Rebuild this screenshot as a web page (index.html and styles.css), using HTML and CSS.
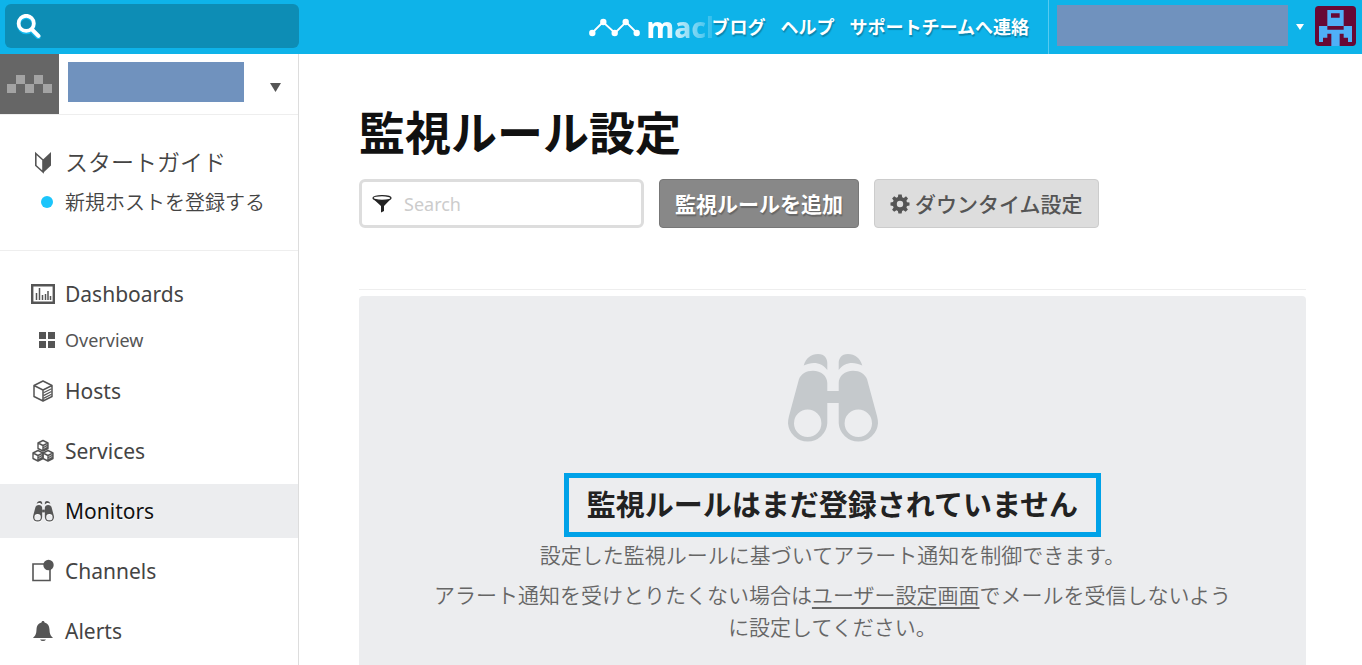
FILE: index.html
```html
<!DOCTYPE html>
<html lang="ja">
<head>
<meta charset="utf-8">
<meta name="viewport" content="width=device-width, initial-scale=1">
<title>監視ルール設定</title>
<link rel="stylesheet" href="styles.css">
</head>
<body>
<svg class="defs" aria-hidden="true">
  <defs>
    <path id="binocular-half" fill-rule="evenodd" d="M15.7 11.5C18 4 23 0 30 0C37 0 39.3 5 39.3 9V16C34 8.500 25 7 15.700 11.500ZM11 25C13 20 18 16.700 25 16.700C33 16.700 39.300 22 39.300 29V69.300A19.700 19.700 0 0 1 0 69.300Q0 66 1 62ZM6 69.300A13.700 13.700 0 0 0 33.400 69.300A13.700 13.700 0 0 0 6 69.300Z"/>
    <symbol id="binoculars" viewBox="0 0 90 90">
      <use href="#binocular-half"/>
      <use href="#binocular-half" transform="translate(90 0) scale(-1 1)"/>
      <path d="M39 37h12v12H39z"/>
    </symbol>
    <symbol id="cube" viewBox="0 0 24 24">
      <path d="M12 2L21 6.500V17.500L12 22L3 17.500V6.500ZM3 6.500L12 11L21 6.500M12 11V22" fill="none" stroke="currentColor" stroke-width="1.500" stroke-linejoin="round"/>
      <path d="M12.500 13.800L20.500 9.700M12.500 16.600L20.500 12.500M12.500 19.400L20.500 15.300" stroke="currentColor" stroke-width="1.200"/>
    </symbol>
  </defs>
</svg>

<header class="topbar">
  <label class="topsearch">
    <svg class="topsearch-icon" viewBox="0 0 24 24" aria-hidden="true">
      <g fill="none" stroke-linecap="round"><g stroke="#12b9f0"><circle cx="9.800" cy="10.300" r="7.300" stroke-width="3.600"/><path d="M15.500 16.500L21.500 22.500" stroke-width="4"/></g><g stroke="#fff"><circle cx="9.800" cy="9" r="7.300" stroke-width="3.600"/><path d="M15.500 15L21.500 21" stroke-width="4"/></g></g>
    </svg>
    <input class="topsearch-input" type="text" aria-label="検索">
  </label>
  <a class="brand" href="#">
    <svg class="brand-mark" viewBox="0 0 51 20" aria-hidden="true">
      <path d="M3 15L14 4L26 15L37 4L48 15" fill="none" stroke="#fff" stroke-width="1.800"/>
      <g fill="#fff"><circle cx="3.300" cy="15" r="3.200"/><circle cx="14.300" cy="4" r="3.200"/><circle cx="25.700" cy="15" r="3.200"/><circle cx="36.700" cy="4" r="3.200"/><circle cx="47.700" cy="15" r="3.200"/></g>
    </svg>
    <span class="brand-name">mach</span>
  </a>
  <nav class="toplinks">
    <a href="#">ブログ</a>
    <a href="#">ヘルプ</a>
    <a href="#">サポートチームへ連絡</a>
  </nav>
  <button class="account" type="button" aria-label="アカウント">
    <span class="account-name"></span>
    <svg class="account-caret" viewBox="0 0 8 6" aria-hidden="true"><path d="M0 0h8L4 6z" fill="#fff"/></svg>
    <svg class="avatar" viewBox="0 0 123 120" aria-hidden="true">
      <rect width="123" height="120" rx="11" fill="#670834"/>
      <path fill="#4fb0f7" fill-rule="evenodd" d="M37 12H86V60H111V108H99V95H86V83H74V120H49V83H37V95H24V108H12V60H37ZM48 22V35H74V22ZM37 60V71H86V60Z"/>
    </svg>
  </button>
</header>

<div class="layout">
  <aside class="sidebar">
    <button class="org" type="button" aria-label="オーガニゼーション">
      <span class="org-logo">
        <svg viewBox="0 0 45 18" aria-hidden="true"><path fill="#a3a3a3" d="M0 9h9v9H0zM9 0h9v9H9zM18 9h9v9h-9zM27 0h9v9h-9zM36 9h9v9h-9z"/></svg>
      </span>
      <span class="org-name"></span>
      <svg class="org-caret" viewBox="0 0 11 9" aria-hidden="true"><path d="M0 0h11L5.500 9z" fill="#555"/></svg>
    </button>

    <div class="guide">
      <a class="item guide-title" href="#">
        <svg class="icon" viewBox="0 0 24 24" aria-hidden="true"><path fill="none" stroke="currentColor" stroke-width="1.600" d="M4.800 3.500L12 10V22L4.800 15.500Z"/><path fill="currentColor" d="M12 9.500L20 2V15.500L12 23Z"/></svg>
        <span>スタートガイド</span>
      </a>
      <a class="item guide-step" href="#">
        <svg class="icon dot" viewBox="0 0 24 24" aria-hidden="true"><circle cx="16" cy="12" r="6" fill="#1cc5fb"/></svg>
        <span>新規ホストを登録する</span>
      </a>
    </div>

    <nav class="menu">
      <a class="item" href="#">
        <svg class="icon" viewBox="0 0 24 24" aria-hidden="true"><path fill="none" stroke="currentColor" stroke-width="2.400" d="M1.200 3.200H22.800V20.800H1.200Z"/><path stroke="currentColor" stroke-width="1.500" d="M5.500 18V11M8.500 18V6M11.500 18V13M14.500 18V12M17 18V9M19.500 18V14"/></svg>
        <span>Dashboards</span>
      </a>
      <a class="item item-sub" href="#">
        <svg class="icon" viewBox="0 0 24 24" aria-hidden="true"><path fill="currentColor" d="M8 4h7v7H8zM17 4h7v7h-7zM8 13h7v7H8zM17 13h7v7h-7z"/></svg>
        <span>Overview</span>
      </a>
      <a class="item" href="#">
        <svg class="icon" aria-hidden="true"><use href="#cube"/></svg>
        <span>Hosts</span>
      </a>
      <a class="item" href="#">
        <svg class="icon" viewBox="0 0 24 24" aria-hidden="true"><g fill="none" stroke="currentColor" stroke-width="1.400" stroke-linejoin="round"><path id="small-cube" d="M12 1.500L17 4V9.500L12 12L7 9.500V4ZM7 4L12 6.500L17 4M12 6.500V12M12.500 8.500L17 6.200M12.500 10.500L17 8.200"/><use href="#small-cube" x="-5" y="10"/><use href="#small-cube" x="5" y="10"/></g></svg>
        <span>Services</span>
      </a>
      <a class="item item-active" href="#" aria-current="page">
        <svg class="icon icon-monitors" viewBox="0 0 24 24" aria-hidden="true"><use href="#binoculars" x="2" y="2" width="21" height="21"/></svg>
        <span>Monitors</span>
      </a>
      <a class="item" href="#">
        <svg class="icon" viewBox="0 0 24 24" aria-hidden="true"><path fill="none" stroke="currentColor" stroke-width="1.600" d="M2 5H19V21.500H2Z"/><circle cx="17.500" cy="6" r="5.200" fill="currentColor"/></svg>
        <span>Channels</span>
      </a>
      <a class="item" href="#">
        <svg class="icon" viewBox="0 0 24 24" aria-hidden="true"><path fill="currentColor" d="M12 2C13 2 13.500 2.600 13.500 3.600C17 4.500 18.300 7 18.500 10.500C18.700 15 19.500 16.500 22 19H2C4.500 16.500 5.300 15 5.500 10.500C5.700 7 7 4.500 10.500 3.600C10.500 2.600 11 2 12 2ZM9 20.500H15Q14 22 12 22T9 20.500Z"/></svg>
        <span>Alerts</span>
      </a>
    </nav>
  </aside>

  <main class="content">
    <h1 class="title">監視ルール設定</h1>
    <div class="toolbar">
      <label class="filter">
        <svg class="filter-icon" viewBox="0 0 20 18" aria-hidden="true"><ellipse cx="10" cy="3" rx="9" ry="2.300" fill="none" stroke="currentColor" stroke-width="1.300"/><path fill="currentColor" d="M.500 3.200C3 6 17 6 19.500 3.200L12 11V16L9 17.500V11Z"/></svg>
        <input class="filter-input" type="text" placeholder="Search" aria-label="Search">
      </label>
      <button class="button button-primary" type="button">監視ルールを追加</button>
      <button class="button button-plain" type="button">
        <svg class="gear" viewBox="0 0 20 20" aria-hidden="true"><path fill="currentColor" fill-rule="evenodd" d="M8.300.500H11.700L12.200 3.200L13.800 3.900L16 2.300L18 4.500L16.400 6.700L17 8.200L19.500 8.600V11.500L17 12L16.400 13.400L17.900 15.600L15.700 17.800L13.500 16.300L12.100 16.900L11.600 19.500H8.400L7.900 16.900L6.400 16.300L4.200 17.800L2.100 15.700L3.600 13.400L3 12L.500 11.500V8.500L3 8L3.600 6.600L2.100 4.400L4.200 2.200L6.400 3.800L7.900 3.100ZM10 6.800A3.200 3.200 0 0 0 10 13.200A3.200 3.200 0 0 0 10 6.800Z"/></svg>
        <span>ダウンタイム設定</span>
      </button>
    </div>
    <section class="empty">
      <svg class="empty-icon" aria-hidden="true"><use href="#binoculars"/></svg>
      <h2 class="empty-title">監視ルールはまだ登録されていません</h2>
      <p class="empty-text">設定した監視ルールに基づいてアラート通知を制御できます。</p>
      <p class="empty-text">アラート通知を受けとりたくない場合は<a href="#">ユーザー設定画面</a>でメールを受信しないように設定してください。</p>
    </section>
  </main>
</div>
</body>
</html>
```

FILE: styles.css
```css
* {
  box-sizing: border-box;
}

body {
  margin: 0;
  min-height: 100vh;
  display: flex;
  flex-direction: column;
  background: #fff;
  color: #444;
  font-family: "Noto Sans", "Noto Sans CJK JP", sans-serif;
}

button,
input {
  font: inherit;
  color: inherit;
  border: 0;
  background: none;
  padding: 0;
}

a {
  color: inherit;
  text-decoration: none;
}

svg {
  flex: none;
}

.defs {
  position: absolute;
  width: 0;
  height: 0;
}

/* Top bar */

.topbar {
  display: flex;
  align-items: center;
  height: 54px;
  padding: 0 6px 0 5px;
  background: #0eb3e9;
  color: #fff;
}

.topsearch {
  display: flex;
  align-items: center;
  width: 294px;
  height: 44px;
  margin-bottom: 2px;
  padding-left: 11px;
  gap: 8px;
  border-radius: 6px;
  background: #0d8db5;
}

.topsearch-icon {
  width: 25px;
  height: 25px;
}

.topsearch-input {
  flex: 1;
  min-width: 0;
  height: 40px;
  font-size: 18px;
}

.brand {
  display: flex;
  align-items: center;
  gap: 7px;
  width: 123px;
  margin-left: auto;
  overflow: hidden;
}

.brand-mark {
  width: 51px;
  height: 20px;
  margin-top: 2px;
}

.brand-name {
  font-family: "Noto Sans", sans-serif;
  font-size: 28px;
  font-weight: 800;
  line-height: 40px;
  background: linear-gradient(90deg, #fff 16px, rgba(255, 255, 255, 0.1) 68px);
  background-clip: text;
  -webkit-background-clip: text;
  color: transparent;
}

.toplinks {
  display: flex;
  gap: 15px;
  padding-right: 19px;
  font-size: 18px;
  font-weight: 700;
  line-height: 54px;
  white-space: nowrap;
  text-shadow: 1px 2px 1px rgba(0, 0, 0, 0.25);
}

.account {
  display: flex;
  align-items: center;
  height: 54px;
  padding-left: 8px;
  border-left: 1px solid #56caf0;
}

.account-name {
  width: 231px;
  height: 41px;
  margin-bottom: 3px;
  background: #7092be;
}

.account-caret {
  width: 8px;
  height: 6px;
  margin: 0 11px 0 8px;
}

.avatar {
  width: 41px;
  height: 40px;
  margin-bottom: 2px;
}

/* Sidebar */

.layout {
  flex: 1;
  display: flex;
}

.sidebar {
  flex: none;
  width: 299px;
  border-right: 1px solid #ddd;
}

.org {
  display: flex;
  align-items: center;
  width: 100%;
  height: 61px;
  border-bottom: 1px solid #eee;
}

.org-logo {
  display: grid;
  place-items: center;
  width: 59px;
  height: 60px;
  background: #666;
}

.org-logo svg {
  width: 45px;
  height: 18px;
}

.org-name {
  width: 176px;
  height: 40px;
  margin: 0 auto 4px 9px;
  background: #7092be;
}

.org-caret {
  width: 11px;
  height: 9px;
  margin: 6px 17px 0 0;
}

.guide {
  height: 136px;
  padding-top: 27px;
  border-bottom: 1px solid #eee;
}

.item {
  display: flex;
  align-items: center;
  gap: 10px;
  height: 54px;
  padding-left: 31px;
  font-size: 21px;
  white-space: nowrap;
}

.guide .item {
  height: 40px;
}

.guide span {
  margin-bottom: 2px;
}

.guide .guide-title {
  font-size: 23px;
  font-weight: 350;
}

.guide .guide-step {
  font-size: 20px;
  font-weight: 350;
}

.icon {
  width: 24px;
  height: 24px;
  color: #555;
  fill: #555;
}

.menu {
  display: flex;
  flex-direction: column;
  gap: 6px;
  padding: 16px 0 6px;
}

.menu .item-sub {
  height: 36px;
  margin: -5px 0 0;
  font-size: 18px;
  color: #555;
}

.item-active {
  background: #ecedef;
  color: #111;
  text-shadow: 0 1px 1px #fff;
}

.icon-monitors {
  filter: drop-shadow(0 1px 0 #fff);
}

/* Content */

.content {
  flex: 1;
  min-width: 0;
  display: flex;
  flex-direction: column;
  padding: 48px 56px 0 60px;
}

.title {
  margin: 0 0 17px;
  font-size: 46px;
  line-height: 60px;
  color: #111;
}

.toolbar {
  display: flex;
  flex-wrap: wrap;
  gap: 15px;
  padding-bottom: 61px;
  margin-bottom: 6px;
  border-bottom: 1px solid #eee;
}

.filter {
  display: flex;
  align-items: center;
  gap: 12px;
  width: 285px;
  height: 49px;
  padding: 0 10px;
  border: 3px solid #ddd;
  border-radius: 6px;
}

.filter-icon {
  width: 20px;
  height: 18px;
  color: #222;
}

.filter-input {
  flex: 1;
  min-width: 0;
  height: 40px;
  font-size: 18px;
}

.filter-input::placeholder {
  color: #ccc;
  opacity: 1;
}

.button {
  display: flex;
  align-items: center;
  justify-content: center;
  gap: 5px;
  height: 49px;
  padding: 0 15px 2px;
  border: 1px solid #777;
  border-radius: 4px;
  font-size: 21px;
  white-space: nowrap;
}

.button-primary {
  background: #888;
  color: #fff;
  font-weight: 700;
  text-shadow: 1px 2px 1px rgba(0, 0, 0, 0.25);
}

.button-plain {
  border-color: #ccc;
  background: #ddd;
  color: #555;
  font-weight: 500;
}

.gear {
  width: 20px;
  height: 20px;
  margin-top: 2px;
}

.empty {
  flex: 1;
  display: flex;
  flex-direction: column;
  align-items: center;
  padding: 58px 68px 16px;
  border-radius: 4px 4px 0 0;
  background: #ecedef;
  text-align: center;
}

.empty-icon {
  width: 90px;
  height: 90px;
  fill: #c5c9cc;
}

.empty-title {
  margin: 29px 0 2px;
  padding: 0 18px;
  border: 5px solid #00a2e8;
  font-size: 29px;
  line-height: 54px;
  color: #222;
}

.empty-text {
  margin: 0 0 8px;
  font-size: 21px;
  font-weight: 350;
  line-height: 32px;
  color: #666;
}

.empty-text a {
  text-decoration: underline 2px;
  text-underline-offset: 4px;
}
```
